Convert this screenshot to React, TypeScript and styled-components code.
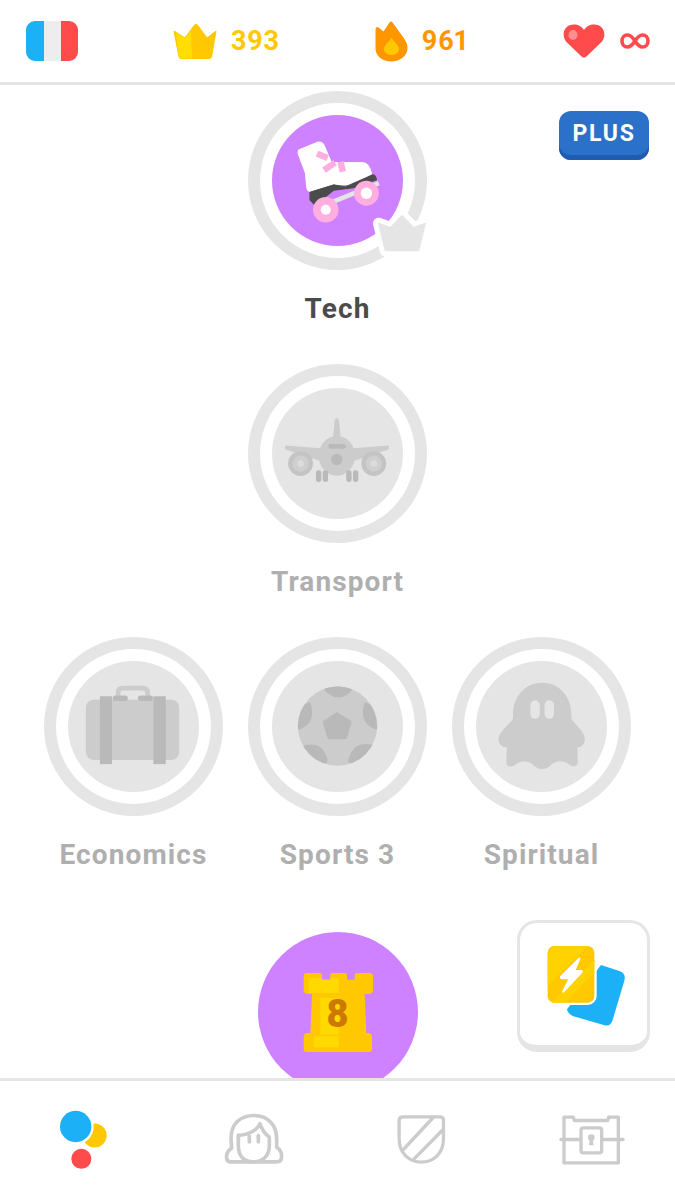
import React from "react";
import styled, { createGlobalStyle } from "styled-components";

const Global = createGlobalStyle`
  html, body { margin: 0; padding: 0; background: #fff; }
  * { box-sizing: border-box; }
`;

const Screen = styled.div`
  width: 675px;
  height: 1200px;
  display: flex;
  flex-direction: column;
  background: #fff;
  font-family: Roboto, "Liberation Sans", sans-serif;
  overflow: hidden;
`;

const TopBar = styled.header`
  height: 85px;
  flex: none;
  display: flex;
  align-items: center;
  justify-content: space-between;
  padding: 0 25px 0 26px;
  border-bottom: 3px solid #e5e5e5;
`;

const Stat = styled.div<{ $color: string; $gap: number }>`
  display: flex;
  align-items: center;
  gap: ${(p) => p.$gap}px;
  color: ${(p) => p.$color};
  font-size: 27px;
  font-weight: 700;
  font-variant-numeric: proportional-nums;
  letter-spacing: 0.6px;
  line-height: 1;
`;

const Main = styled.main`
  position: relative;
  flex: 1;
  min-height: 0;
  padding-top: 6px;
  overflow: hidden;
`;

const Row = styled.div`
  height: 273px;
  display: flex;
  justify-content: center;
`;

const Node = styled.div`
  width: 204px;
  display: flex;
  flex-direction: column;
  align-items: center;
`;

const Ring = styled.div`
  position: relative;
  width: 179px;
  height: 179px;
  flex: none;
  padding: 12px;
  border: 12px solid #e5e5e5;
  border-radius: 50%;
`;

const Disc = styled.div<{ $active?: boolean }>`
  width: 100%;
  height: 100%;
  border-radius: 50%;
  overflow: hidden;
  background: ${(p) => (p.$active ? "#ce82ff" : "#e5e5e5")};
  svg { display: block; width: 100%; height: 100%; }
`;

const CrownBadge = styled.svg`
  position: absolute;
  left: 111.5px;
  top: 107px;
  width: 58.3px;
  height: 46.7px;
  overflow: visible;
`;

const Label = styled.div<{ $active?: boolean }>`
  margin-top: 21px;
  height: 36px;
  font-size: 28px;
  line-height: 36px;
  font-weight: 700;
  letter-spacing: 1.1px;
  white-space: nowrap;
  color: ${(p) => (p.$active ? "#4b4b4b" : "#afafaf")};
`;

const CastleDisc = styled.div`
  position: relative;
  width: 160px;
  height: 160px;
  margin-top: 22px;
  border-radius: 50%;
  background: #ce82ff;
  svg { display: block; width: 100%; height: 100%; }
`;

const CastleLevel = styled.span`
  position: absolute;
  left: 0;
  right: 0;
  top: 62px;
  text-align: center;
  font-size: 38px;
  line-height: 40px;
  font-weight: 900;
  color: #cd7900;
`;

const PlusButton = styled.button`
  position: absolute;
  top: 26px;
  right: 26px;
  width: 90px;
  height: 49px;
  padding: 0 0 5px;
  border: 0;
  border-radius: 12px;
  background: #2b70c9;
  box-shadow: inset 0 -5px 0 #1f5cb0;
  color: #fff;
  font: 700 23px/1 Roboto, "Liberation Sans", sans-serif;
  letter-spacing: 1.7px;
`;

const CardsButton = styled.button`
  position: absolute;
  top: 835px;
  right: 25px;
  width: 133px;
  height: 132px;
  padding: 0;
  background: #fff;
  border: 3px solid #e5e5e5;
  border-bottom-width: 7px;
  border-radius: 20px;
  svg { display: block; width: 127px; height: 122px; }
`;

const NavBar = styled.nav`
  height: 122px;
  flex: none;
  display: grid;
  grid-template-columns: repeat(4, 1fr);
  border-top: 3px solid #e5e5e5;
`;

const NavItem = styled.div`
  display: flex;
  align-items: center;
  justify-content: center;
  svg { display: block; width: 80px; height: 80px; }
`;

const GRAY = "#cccccc";
const DARK = "#b9b9b9";

const Flag = () => (
  <svg width="52" height="40" viewBox="0 0 52 40">
    <clipPath id="flagclip"><rect width="52" height="40" rx="9" /></clipPath>
    <g clipPath="url(#flagclip)">
      <rect width="18" height="40" fill="#1cb0f6" />
      <rect x="18" width="17" height="40" fill="#ededed" />
      <rect x="35" width="17" height="40" fill="#ff4b4b" />
    </g>
  </svg>
);

const Crown = () => (
  <svg width="44" height="35" viewBox="0 0 44 35">
    <path d="M1 7 L12 14 L21.5 1 Q23 -.5 24.5 1 L34 14 L43 7 L38.5 33 Q38 34.5 36.5 34.5 L8 34.5 Q6.5 34.5 6 33 Z" fill="#ffc800" stroke="#ffc800" strokeLinejoin="round" />
    <path d="M3 9 L12 14 L18 7 L19 34.5 L8 34.5 Q6.5 34.5 6 33 Z" fill="#ffde00" />
  </svg>
);

const Flame = () => (
  <svg width="33" height="41" viewBox="0 0 33 41">
    <path d="M14.5 1.5 Q16 -.5 17.5 1.5 L29.5 18 Q32.5 22.5 32.5 27 C32.5 35 25 40.5 16.5 40.5 C7 40.5 .5 35 .5 27 L.5 9 Q.5 5 3.5 6.5 L8.5 10.5 Z" fill="#ff9600" />
    <path d="M16.5 16.5 C19 21 24 24 24 28 C24 31.5 20.5 34 16.5 34 C12.5 34 9 31.5 9 28 C9 24 14 21 16.5 16.5 Z" fill="#ffc800" />
  </svg>
);

const Heart = () => (
  <svg width="42" height="34" viewBox="0 0 42 34">
    <path d="M21 33.5 Q19.5 33.5 18 32 L3 17.5 C-2 11 1 .5 11 .5 C15 .5 19 2.5 21 6 C23 2.5 27 .5 31 .5 C41 .5 44 11 39 17.5 L24 32 Q22.5 33.5 21 33.5 Z" fill="#ff4b4b" />
    <ellipse cx="10" cy="11" rx="4.5" ry="5" fill="#ff8f8f" />
  </svg>
);

const Infinity_ = () => (
  <svg width="30" height="16" viewBox="0 0 30 16">
    <path d="M15 8 C12.5 4 10 2 7.5 2 C4.2 2 2 4.7 2 8 C2 11.3 4.2 14 7.5 14 C10 14 12.5 12 15 8 C17.5 4 20 2 22.5 2 C25.8 2 28 4.7 28 8 C28 11.3 25.8 14 22.5 14 C20 14 17.5 12 15 8 Z" fill="none" stroke="#ff4b4b" strokeWidth="3.6" />
  </svg>
);

const Skate = () => (
  <svg viewBox="97 92 390 390">
    <path d="M280 350 L415 295" stroke="#e5e5e5" strokeWidth="14" />
    <path d="M176 195 L232 172 Q248 168 255 185 L275 232 L365 232 Q388 232 395 268 L340 300 L275 302 L210 322 Q198 318 198 300 L195 265 L175 212 Q171 201 176 195 Z" fill="#fff" />
    <path d="M210 322 L280 300 L315 306 L340 295 L398 270 Q406 272 408 285 L345 308 L280 316 L225 360 L210 345 Z" fill="#4b4b4b" stroke="#4b4b4b" strokeWidth="3" strokeLinejoin="round" />
    <path d="M231 207 L263 220" stroke="#ffaee0" strokeWidth="19" />
    <path d="M252 256 L285 234" stroke="#ffaee0" strokeWidth="19" />
    <path d="M301 231 L308 261" stroke="#ffaee0" strokeWidth="19" />
    <circle cx="257" cy="374" r="38" fill="#ffaee0" />
    <circle cx="257" cy="374" r="15" fill="#fff" />
    <circle cx="378" cy="325" r="37" fill="#ffaee0" />
    <circle cx="378" cy="325" r="17" fill="#fff" />
  </svg>
);

const Plane = () => (
  <svg viewBox="97 85 390 390">
    <path d="M284 180 Q290 168 296 180 L302 235 L278 235 Z" fill={GRAY} />
    <path d="M138 256 L240 264 L340 264 L442 256 Q448 258 444 268 L340 302 L240 302 L138 268 Q132 260 138 256 Z" fill={GRAY} />
    <circle cx="182" cy="310" r="37" fill="#c4c4c4" />
    <circle cx="182" cy="310" r="24" fill="#cfcfcf" />
    <circle cx="182" cy="310" r="10" fill="#dcdcdc" />
    <circle cx="400" cy="310" r="37" fill="#c4c4c4" />
    <circle cx="400" cy="310" r="24" fill="#cfcfcf" />
    <circle cx="400" cy="310" r="10" fill="#dcdcdc" />
    <ellipse cx="290" cy="287" rx="54" ry="59" fill={GRAY} />
    <rect x="265" y="252" width="52" height="14" rx="7" fill={DARK} />
    <circle cx="290" cy="298" r="17" fill={DARK} />
    <rect x="228" y="330" width="16" height="35" rx="8" fill={DARK} />
    <rect x="248" y="330" width="16" height="35" rx="8" fill={DARK} />
    <rect x="318" y="330" width="16" height="35" rx="8" fill={DARK} />
    <rect x="338" y="330" width="16" height="35" rx="8" fill={DARK} />
  </svg>
);

const Case = () => (
  <svg viewBox="117 93 390 390">
    <path d="M266 205 L266 188 Q266 174 280 174 L340 174 Q354 174 354 188 L354 205" fill="none" stroke={GRAY} strokeWidth="14" />
    <rect x="170" y="208" width="278" height="180" rx="24" fill={GRAY} />
    <rect x="212" y="198" width="36" height="202" fill={DARK} />
    <rect x="371" y="198" width="37" height="202" fill={DARK} />
    <rect x="250" y="196" width="45" height="16" rx="8" fill={DARK} />
    <rect x="325" y="196" width="45" height="16" rx="8" fill={DARK} />
  </svg>
);

const Ball = () => (
  <svg viewBox="727 93 390 390">
    <clipPath id="ballclip"><circle cx="922" cy="287" r="118" /></clipPath>
    <circle cx="922" cy="287" r="118" fill={GRAY} />
    <g clipPath="url(#ballclip)" fill={DARK} stroke={DARK} strokeWidth="8" strokeLinejoin="round">
      <path d="M920 250 L960 274 L946 322 L896 322 L882 274 Z" />
      <path d="M880 165 L968 165 Q955 196 925 198 Q895 196 880 165 Z" />
      <path d="M800 295 L800 240 L838 220 Q848 250 836 272 Q822 290 800 295 Z" />
      <path d="M1044 295 L1044 240 L1006 220 Q996 250 1008 272 Q1022 290 1044 295 Z" />
      <path d="M818 350 Q850 340 868 352 Q888 372 888 392 L860 410 Z" />
      <path d="M1028 346 Q995 340 978 352 Q960 372 958 392 L990 410 Z" />
    </g>
  </svg>
);

const Ghost = () => (
  <svg viewBox="108 93 390 390">
    <path d="M305 158 C250 158 218 205 218 250 L218 265 C205 285 175 305 175 325 C175 345 190 350 200 350 L198 395 C198 408 212 410 222 404 C245 385 262 390 275 400 C295 420 315 420 335 400 C350 388 370 388 390 404 C400 410 411 405 411 395 L410 350 C420 350 432 342 432 325 C432 305 405 285 392 265 L392 250 C392 205 360 158 305 158 Z" fill={GRAY} />
    <rect x="270" y="210" width="28" height="55" rx="14" fill="#e5e5e5" />
    <rect x="312" y="210" width="28" height="55" rx="14" fill="#e5e5e5" />
  </svg>
);

const Castle = () => (
  <svg viewBox="53 37 480 480">
    <path d="M198 160 L237 160 Q245 160 245 168 L245 180 L270 180 L270 168 Q270 160 278 160 L312 160 Q320 160 320 168 L320 180 L343 180 L343 168 Q343 160 351 160 L388 160 Q398 160 398 170 L398 210 Q398 223 384 223 L373 223 L378 340 L386 340 Q395 342 395 352 L395 388 Q395 397 386 397 L200 397 Q190 397 190 388 L190 352 Q190 342 200 340 L210 340 L215 223 L204 223 Q190 223 190 210 L190 170 Q190 160 198 160 Z" fill="#ffc800" />
    <path d="M205 175 L245 175 L245 180 L270 180 L270 175 L295 175 L295 220 L205 220 Z" fill="#ffd900" />
    <rect x="240" y="235" width="55" height="110" fill="#ffd900" />
    <rect x="220" y="350" width="75" height="33" fill="#ffd900" />
  </svg>
);

const Cards = () => (
  <svg viewBox="47 39 381 366">
    <path d="M290 165 L345 183 Q366 190 360 212 L325 330 Q318 352 298 345 L205 318 Q190 310 188 298 Z" fill="#1cb0f6" />
    <rect x="130" y="108" width="140" height="170" rx="20" fill="#ffc800" stroke="#fff" strokeWidth="14" paintOrder="stroke" />
    <path d="M150 108 L250 108 L130 228 L130 128 Z M270 150 L270 190 L182 278 L142 278 Z" fill="#ffd200" />
    <path d="M222 144 Q229 138 228 148 L214 180 L232 180 Q238 182 234 188 L180 246 Q172 252 174 242 L192 208 L172 208 Q164 206 168 198 Z" fill="#fff" />
  </svg>
);

const NavStroke = styled.g`
  fill: none;
  stroke: #cccccc;
  stroke-linecap: round;
  stroke-linejoin: round;
`;

const NavHome = () => (
  <svg viewBox="133 76.5 240 240">
    <circle cx="285" cy="180" r="36" fill="#ffc800" />
    <circle cx="228" cy="153" r="54" fill="#fff" />
    <circle cx="228" cy="153" r="47" fill="#1cb0f6" />
    <circle cx="245" cy="250" r="30" fill="#ff4b4b" />
  </svg>
);

const NavChar = () => (
  <svg viewBox="639 76.5 240 240">
    <NavStroke strokeWidth="11">
      <path d="M695 259 L690 259 Q678 257 680 240 Q682 226 695 218 L693 190 C693 145 720 120 762 120 C805 120 830 150 830 190 L830 215 Q845 225 845 242 Q845 259 830 259 Z" />
      <path d="M715 179 L715 210 C715 240 730 259 760 259 C790 259 808 240 808 210 L808 185 C795 175 785 160 780 145 C770 165 745 178 715 180" />
      <path d="M748 182 L748 199 M775 180 L775 199" />
    </NavStroke>
  </svg>
);

const NavShield = () => (
  <svg viewBox="131.6 76.5 240 240">
    <NavStroke strokeWidth="10">
      <path d="M195 124 L305 124 Q316 124 316 135 L316 190 C316 235 285 260 250 260 C215 260 183 235 183 190 L183 135 Q183 124 195 124 Z" />
      <path d="M192 226 L285 126 M228 250 L312 165" />
    </NavStroke>
  </svg>
);

const NavChest = () => (
  <svg viewBox="638 76.5 240 240">
    <NavStroke strokeWidth="10">
      <path d="M677 125 L705 125 L708 135 L808 135 L811 125 L840 125 L840 262 L677 262 Z" />
      <path d="M668 192 L854 192" />
      <rect x="728" y="157" width="62" height="75" rx="7" fill="#fff" />
    </NavStroke>
    <circle cx="759" cy="186" r="10" fill="#ccc" />
    <path d="M755 186 L763 186 L766 209 L752 209 Z" fill="#ccc" />
  </svg>
);

type Skill = { title: string; icon: React.ReactNode; active?: boolean };

const rows: Skill[][] = [
  [{ title: "Tech", icon: <Skate />, active: true }],
  [{ title: "Transport", icon: <Plane /> }],
  [
    { title: "Economics", icon: <Case /> },
    { title: "Sports 3", icon: <Ball /> },
    { title: "Spiritual", icon: <Ghost /> },
  ],
];

export default function App() {
  return (
    <Screen>
      <Global />
      <TopBar>
        <Flag />
        <Stat $color="#ffc800" $gap={14}><Crown />393</Stat>
        <Stat $color="#ff9600" $gap={14}><Flame />961</Stat>
        <Stat $color="#ff4b4b" $gap={15}><Heart /><Infinity_ /></Stat>
      </TopBar>
      <Main>
        {rows.map((row) => (
          <Row key={row[0].title}>
            {row.map((s) => (
              <Node key={s.title}>
                <Ring>
                  <Disc $active={s.active}>{s.icon}</Disc>
                  {s.active && (
                    <CrownBadge viewBox="395 375 175 140">
                      <path d="M415 415 L450 428 L485 392 L520 428 L555 415 L535 497 L435 497 Z" fill="#e5e5e5" stroke="#fff" strokeWidth="34" strokeLinejoin="round" />
                      <path d="M415 415 L450 428 L485 392 L520 428 L555 415 L535 497 L435 497 Z" fill="#e5e5e5" stroke="#e5e5e5" strokeWidth="4" strokeLinejoin="round" />
                    </CrownBadge>
                  )}
                </Ring>
                <Label $active={s.active}>{s.title}</Label>
              </Node>
            ))}
          </Row>
        ))}
        <Row>
          <CastleDisc>
            <Castle />
            <CastleLevel>8</CastleLevel>
          </CastleDisc>
        </Row>
        <PlusButton>PLUS</PlusButton>
        <CardsButton><Cards /></CardsButton>
      </Main>
      <NavBar>
        <NavItem><NavHome /></NavItem>
        <NavItem><NavChar /></NavItem>
        <NavItem><NavShield /></NavItem>
        <NavItem><NavChest /></NavItem>
      </NavBar>
    </Screen>
  );
}
